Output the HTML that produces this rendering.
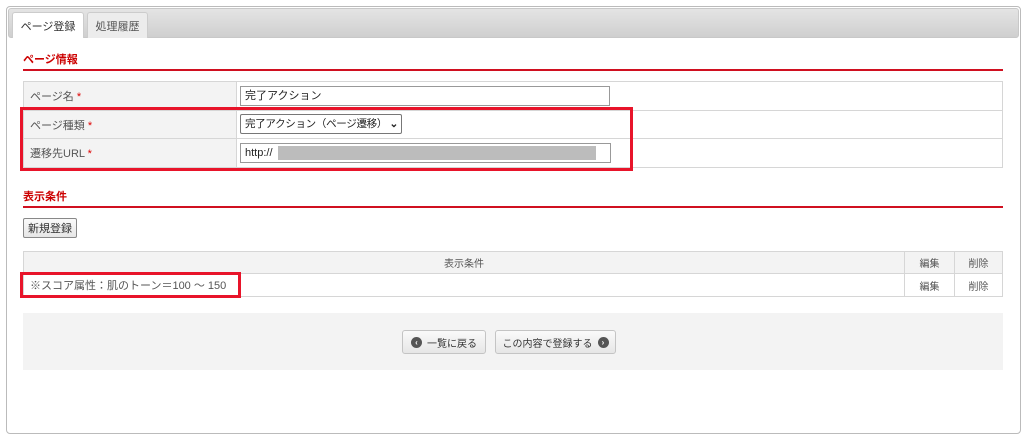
<!DOCTYPE html>
<html><head><meta charset="utf-8"><style>
*{box-sizing:border-box;margin:0;padding:0}
body{width:1024px;height:438px;background:#fff;font-family:"Liberation Sans","Noto Sans CJK JP",sans-serif;font-size:11px;color:#333;position:relative;overflow:hidden}
.abs{position:absolute}
.panel{left:6px;top:6px;width:1015px;height:428px;border:1px solid #bbb;border-radius:4px}
.tabbar{left:8px;top:8px;width:1011px;height:30px;background:linear-gradient(#e4e4e4,#cfcfcf);border:1px solid #c8c8c8;border-radius:3px}
.tab{top:12px;height:26px;border:1px solid #ccc;border-bottom:none;border-radius:3px 3px 0 0;padding-top:5px;text-align:center;font-size:11px}
.h{color:#c00;font-weight:bold;font-size:11px}
.rl{left:23px;width:980px;height:2px;background:#d01020}
table{border-collapse:collapse;position:absolute}
td{border:1px solid #d6d6d6;padding:0 6px}
.lab{background:#f3f3f3;color:#555}
.star{color:#d00}
.inp{border:1px solid #999;height:20px;background:#fff;padding:0 4px;line-height:18px;font-size:11px;color:#222;white-space:nowrap;overflow:hidden}
.btn{border:1px solid #c4c4c4;border-radius:3px;background:linear-gradient(#fafafa,#e6e6e6);font-size:10px;color:#333;display:flex;align-items:center;justify-content:center;gap:5px}
.ic{width:11px;height:11px;border-radius:50%;background:#555;color:#fff;font-size:8px;line-height:11px;text-align:center;font-weight:bold}
.red{border:3px solid #e8142a}
</style></head><body>
<div class="abs panel"></div>
<div class="abs tabbar"></div>
<div class="abs tab" style="left:12px;width:72px;background:#fff">ページ登録</div>
<div class="abs tab" style="left:87px;width:61px;background:#ececec;color:#555">処理履歴</div>
<div class="abs h" style="left:23px;top:51px">ページ情報</div>
<div class="abs rl" style="top:69px"></div>
<table style="left:23px;top:81px;width:980px">
<tr style="height:29px"><td class="lab" style="width:213px">ページ名 <span class="star">*</span></td><td></td></tr>
<tr style="height:28px"><td class="lab">ページ種類 <span class="star">*</span></td><td></td></tr>
<tr style="height:29px"><td class="lab">遷移先URL <span class="star">*</span></td><td></td></tr>
</table>
<div class="abs inp" style="left:240px;top:86px;width:370px">完了アクション</div>
<div class="abs inp" style="left:240px;top:114px;width:162px;border-radius:2px;border-color:#777;padding-right:14px;font-size:10.5px;letter-spacing:-0.3px">完了アクション（ページ遷移）<span style="position:absolute;right:3px;top:0;font-weight:bold">⌄</span></div>
<div class="abs inp" style="left:240px;top:143px;width:371px">http://</div>
<div class="abs" style="left:278px;top:146px;width:318px;height:14px;background:#bcbcbc"></div>
<div class="abs red" style="left:20px;top:107px;width:613px;height:64px"></div>
<div class="abs h" style="left:23px;top:188px">表示条件</div>
<div class="abs rl" style="top:206px"></div>
<div class="abs btn" style="left:23px;top:218px;width:54px;height:20px;border-color:#888;font-size:11px;border-radius:2px">新規登録</div>
<table style="left:23px;top:251px;width:980px">
<tr style="height:22px;background:#f3f3f3;color:#555;text-align:center;font-size:10px"><td>表示条件</td><td style="width:50px">編集</td><td style="width:48px">削除</td></tr>
<tr style="height:23px;font-size:11px;color:#555"><td style="text-align:left">※スコア属性：肌のトーン＝100 ～ 150</td><td style="text-align:center;font-size:10px">編集</td><td style="text-align:center;font-size:10px">削除</td></tr>
</table>
<div class="abs red" style="left:20px;top:272px;width:221px;height:26px"></div>
<div class="abs" style="left:23px;top:313px;width:980px;height:57px;background:#f3f3f3"></div>
<div class="abs btn" style="left:402px;top:330px;width:84px;height:24px"><span class="ic">‹</span>一覧に戻る</div>
<div class="abs btn" style="left:495px;top:330px;width:121px;height:24px">この内容で登録する<span class="ic">›</span></div>
</body></html>
